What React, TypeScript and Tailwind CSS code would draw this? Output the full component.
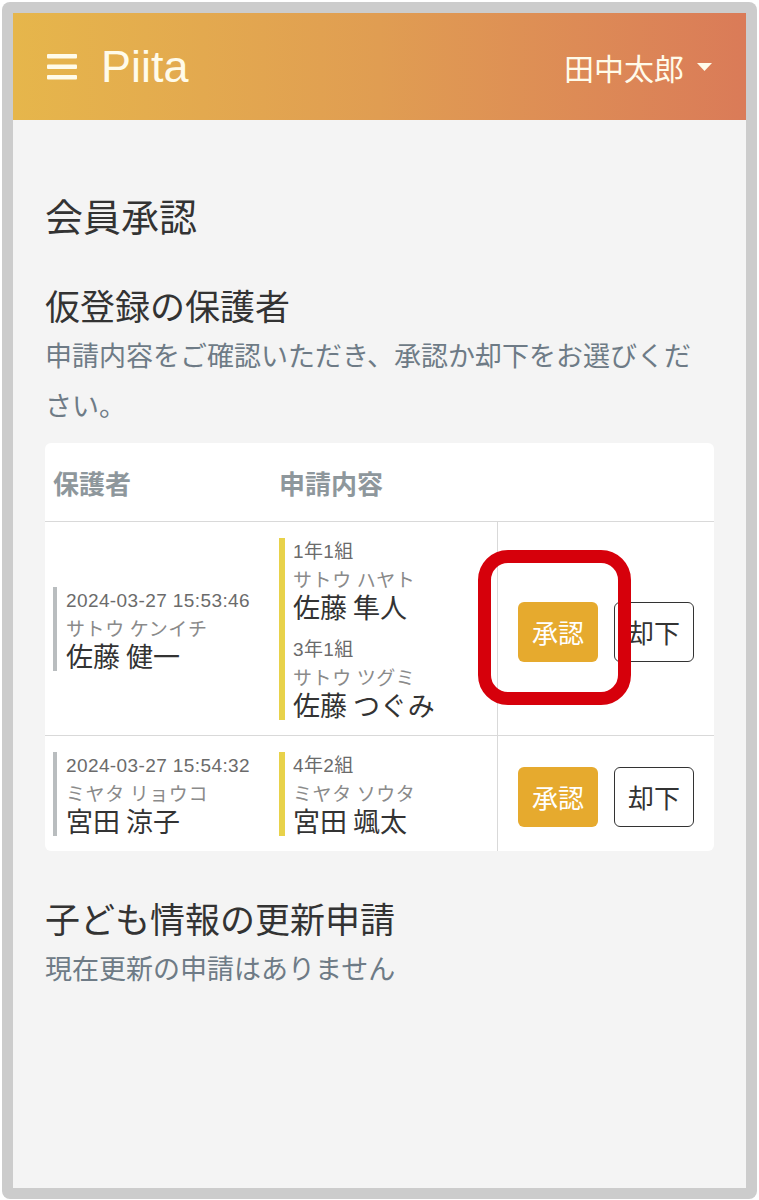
const jp = '"Noto Sans CJK JP", sans-serif';
const mixed = '"Liberation Sans", "Noto Sans CJK JP", sans-serif';

type Child = { grade: string; kana: string; name: string };
type Row = { date: string; kana: string; name: string; children: Child[]; highlight?: boolean };

const rows: Row[] = [
  {
    date: '2024-03-27 15:53:46',
    kana: 'サトウ ケンイチ',
    name: '佐藤 健一',
    highlight: true,
    children: [
      { grade: '1年1組', kana: 'サトウ ハヤト', name: '佐藤 隼人' },
      { grade: '3年1組', kana: 'サトウ ツグミ', name: '佐藤 つぐみ' },
    ],
  },
  {
    date: '2024-03-27 15:54:32',
    kana: 'ミヤタ リョウコ',
    name: '宮田 涼子',
    children: [{ grade: '4年2組', kana: 'ミヤタ ソウタ', name: '宮田 颯太' }],
  },
];

const Hamburger = () => (
  <svg width="30" height="27" viewBox="0 0 30 27" className="fill-[#fffbea]">
    <rect x="0" y="1" width="30" height="4.5" rx="1" />
    <rect x="0" y="11.5" width="30" height="4.5" rx="1" />
    <rect x="0" y="22" width="30" height="4.5" rx="1" />
  </svg>
);

const Caret = () => (
  <svg width="15" height="8" viewBox="0 0 15 8" className="fill-[#fffbea]">
    <path d="M0 0 L15 0 L7.5 8 Z" />
  </svg>
);

const PersonBlock = ({ top, kana, name }: { top: string; kana: string; name: string }) => (
  <div className="flex flex-col">
    <span className="text-[19px] leading-[27px] text-[#6b6b6b] tracking-[0.4px]" style={{ fontFamily: mixed }}>
      {top}
    </span>
    <span className="text-[19px] leading-[27px] text-[#8a8a8a] tracking-[0.6px]" style={{ fontFamily: jp }}>
      {kana}
    </span>
    <span className="text-[27px] leading-[30px] text-[#333]" style={{ fontFamily: jp }}>
      {name}
    </span>
  </div>
);

export default function App() {
  return (
    <div className="bg-white p-[2px]">
      <div className="bg-[#cccccc] rounded-[8px] p-[11px]">
        <div className="bg-[#f4f4f4] h-[1175px] flex flex-col" style={{ fontFamily: jp }}>
          <header className="h-[107px] shrink-0 bg-gradient-to-r from-[#e6b64b] via-[#e09d52] to-[#da7b58] flex items-center justify-between pl-[34px] pr-[34px]">
            <div className="flex items-center gap-[24px]">
              <Hamburger />
              <span className="text-[45px] leading-none text-[#fffbea]" style={{ fontFamily: mixed }}>
                Piita
              </span>
            </div>
            <div className="flex items-center gap-[13px]">
              <span className="text-[30px] leading-none text-[#fffbea]">田中太郎</span>
              <Caret />
            </div>
          </header>

          <main className="px-[32px] pt-[72px]">
            <h1 className="text-[38px] leading-[46px] text-[#333]">会員承認</h1>
            <h2 className="mt-[45px] text-[35px] leading-[44px] text-[#333]">仮登録の保護者</h2>
            <p className="mt-[3px] text-[27px] leading-[50px] text-[#6e7b86]">
              申請内容をご確認いただき、承認か却下をお選びください。
            </p>

            <div className="mt-[13px] bg-white rounded-[6px]">
              <div className="grid grid-cols-[226px_226px_1fr] h-[79px] items-center border-b border-[#d9d9d9]">
                <span className="pl-[8px] text-[26px] font-bold text-[#8e979c]">保護者</span>
                <span className="pl-[8px] text-[26px] font-bold text-[#8e979c]">申請内容</span>
                <span />
              </div>
              {rows.map((row, i) => (
                <div
                  key={row.date}
                  className={`grid grid-cols-[226px_226px_1fr] ${i < rows.length - 1 ? 'border-b border-[#d9d9d9]' : ''}`}
                >
                  <div className="pl-[8px] flex items-center pt-[16px] pb-[15px]">
                    <div className="border-l-4 border-[#b9bdbf] pl-[9px]">
                      <PersonBlock top={row.date} kana={row.kana} name={row.name} />
                    </div>
                  </div>
                  <div className="pl-[8px] flex items-center pt-[16px] pb-[15px]">
                    <div className="border-l-[6px] border-[#e8d24a] pl-[8px] flex flex-col gap-[14px]">
                      {row.children.map((c) => (
                        <PersonBlock key={c.name} top={c.grade} kana={c.kana} name={c.name} />
                      ))}
                    </div>
                  </div>
                  <div className="relative border-l border-[#d9d9d9] flex items-center justify-center gap-[16px] pt-[6px]">
                    <button className="h-[60px] px-[14px] rounded-[6px] bg-[#e6aa2e] text-white text-[26px]">
                      承認
                    </button>
                    <button className="h-[60px] px-[13px] rounded-[6px] border-[1.5px] border-[#333] bg-white text-[#333] text-[26px]">
                      却下
                    </button>
                    {row.highlight && (
                      <div className="absolute left-[-20px] top-[28px] w-[153px] h-[155px] rounded-[30px] border-[13px] border-[#d6000b]" />
                    )}
                  </div>
                </div>
              ))}
            </div>

            <h2 className="mt-[45px] text-[35px] leading-[44px] text-[#333]">子ども情報の更新申請</h2>
            <p className="mt-[8px] text-[27px] leading-[40px] text-[#6e7b86]">現在更新の申請はありません</p>
          </main>
        </div>
      </div>
    </div>
  );
}
